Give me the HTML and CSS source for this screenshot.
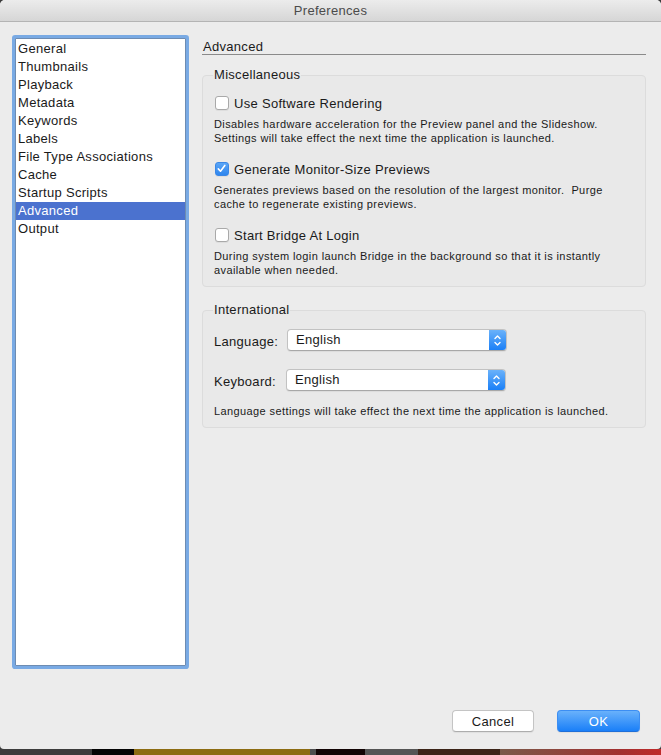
FILE: index.html
```html
<!DOCTYPE html>
<html lang="en">
<head>
    <meta charset="UTF-8">
    <meta name="viewport" content="width=device-width, initial-scale=1.0">
    <title>Preferences</title>
    <link rel="stylesheet" href="styles.css">
</head>
<body>
    <div class="window">
        <div class="titlebar">Preferences</div>

        <div class="main">
            <ul class="nav-list">
                <li>General</li>
                <li>Thumbnails</li>
                <li>Playback</li>
                <li>Metadata</li>
                <li>Keywords</li>
                <li>Labels</li>
                <li>File Type Associations</li>
                <li>Cache</li>
                <li>Startup Scripts</li>
                <li class="selected">Advanced</li>
                <li>Output</li>
            </ul>

            <div class="pane">
                <div class="pane-title">Advanced</div>

                <fieldset class="group misc">
                    <legend>Miscellaneous</legend>

                    <div class="option">
                        <span class="check"></span>
                        <span>Use Software Rendering</span>
                    </div>
                    <div class="option-desc">
                        Disables hardware acceleration for the Preview panel and the Slideshow.<br>
                        Settings will take effect the next time the application is launched.
                    </div>

                    <div class="option">
                        <span class="check checked">
                            <svg width="13" height="13" viewBox="0 0 13 13"><path d="M3.3 6.9 L5.5 9.2 L9.8 3.4" fill="none" stroke="#fff" stroke-width="1.6" stroke-linecap="round" stroke-linejoin="round"/></svg>
                        </span>
                        <span>Generate Monitor-Size Previews</span>
                    </div>
                    <div class="option-desc">
                        Generates previews based on the resolution of the largest monitor.&nbsp; Purge<br>
                        cache to regenerate existing previews.
                    </div>

                    <div class="option">
                        <span class="check"></span>
                        <span>Start Bridge At Login</span>
                    </div>
                    <div class="option-desc">
                        During system login launch Bridge in the background so that it is instantly<br>
                        available when needed.
                    </div>
                </fieldset>

                <fieldset class="group intl">
                    <legend>International</legend>

                    <div class="field-row">
                        <span class="field-label">Language:</span>
                        <div class="popup">
                            <span class="popup-value">English</span>
                            <span class="popup-arrows">
                                <svg width="17" height="21" viewBox="0 0 17 21"><path d="M6 8.5 L8.5 6 L11 8.5 M6 12.5 L8.5 15 L11 12.5" fill="none" stroke="#fff" stroke-width="1.4" stroke-linecap="round" stroke-linejoin="round"/></svg>
                            </span>
                        </div>
                    </div>

                    <div class="field-row keyboard">
                        <span class="field-label">Keyboard:</span>
                        <div class="popup">
                            <span class="popup-value">English</span>
                            <span class="popup-arrows">
                                <svg width="17" height="21" viewBox="0 0 17 21"><path d="M6 8.5 L8.5 6 L11 8.5 M6 12.5 L8.5 15 L11 12.5" fill="none" stroke="#fff" stroke-width="1.4" stroke-linecap="round" stroke-linejoin="round"/></svg>
                            </span>
                        </div>
                    </div>

                    <div class="option-desc note">
                        Language settings will take effect the next time the application is launched.
                    </div>
                </fieldset>
            </div>
        </div>

        <div class="footer">
            <button class="btn">Cancel</button>
            <button class="btn primary">OK</button>
        </div>
    </div>
    <div class="desktop"></div>
</body>
</html>
```

FILE: styles.css
```css
html, body {
    margin: 0;
    padding: 0;
}

body {
    width: 661px;
    height: 755px;
    overflow: hidden;
    font-family: "Liberation Sans", Arial, sans-serif;
    font-size: 13px;
    letter-spacing: 0.3px;
    color: #1a1a1a;
    background: #3a3a3a;
}

.window {
    height: 749px;
    background: #ececec;
    border-radius: 5px 5px 4px 4px;
    display: flex;
    flex-direction: column;
    overflow: hidden;
}

.titlebar {
    height: 21px;
    line-height: 22px;
    text-align: center;
    color: #4b4b4b;
    background: linear-gradient(#ececec, #d6d6d6);
    border-bottom: 1px solid #b4b4b4;
    flex-shrink: 0;
}

.main {
    display: flex;
    padding: 16px 15px 0 15px;
    height: 631px;
}

/* source list with focus ring */
.nav-list {
    list-style: none;
    margin: 0;
    padding: 1px 0 0 0;
    width: 169px;
    height: 625px;
    background: #fff;
    border: 1px solid #6d8cb2;
    box-shadow: 0 0 0 3px #79aae4;
    border-radius: 1px;
    flex-shrink: 0;
}

.nav-list li {
    height: 18px;
    line-height: 18px;
    padding-left: 2px;
    white-space: nowrap;
}

.nav-list li.selected {
    background: #4b72cf;
    color: #fff;
}

.pane {
    flex: 1;
    margin-left: 16px;
    margin-right: 0;
}

.pane-title {
    line-height: 14px;
    padding-top: 2px;
    padding-left: 1px;
    border-bottom: 1px solid #8a8a8a;
}

.group {
    margin: 12px 0 0 0;
    padding: 11px 10px 9px 11px;
    border: 1px solid #dcdcdc;
    border-radius: 4px;
    background: rgba(0, 0, 0, 0.012);
}

.group legend {
    padding: 0 1px;
    line-height: 16px;
    margin-left: -1px;
}

.intl {
    margin-top: 15px;
    padding-top: 11px;
}

.option {
    display: flex;
    align-items: center;
    gap: 5px;
    height: 18px;
    margin-top: 15px;
}

.misc .option:first-of-type {
    margin-top: 0;
}

.check {
    width: 12px;
    height: 12px;
    border: 1px solid #a9a9a9;
    border-radius: 3px;
    background: #fff;
    margin-left: 1px;
    box-shadow: 0 1px 0 rgba(0, 0, 0, 0.05);
    position: relative;
}

.check.checked {
    border-color: #3a87e6;
    background: linear-gradient(#5aa5f6, #2f86ee);
}

.check svg {
    position: absolute;
    left: -1px;
    top: -1px;
}

.option-desc {
    font-size: 11px;
    line-height: 14px;
    letter-spacing: 0.4px;
    margin-top: 5px;
    color: #1a1a1a;
}

.field-row {
    display: flex;
    align-items: center;
    height: 22px;
}

.field-row.keyboard {
    margin-top: 18px;
}

.field-label {
    width: 73px;
    padding-top: 2px;
}

.keyboard .field-label {
    width: 72px;
}

.popup {
    width: 218px;
    height: 20px;
    display: flex;
    background: #fff;
    border: 1px solid #c2c2c2;
    border-bottom-color: #a8a8a8;
    border-radius: 4px;
    overflow: hidden;
    box-shadow: 0 1px 1px rgba(0, 0, 0, 0.06);
}

.popup-value {
    flex: 1;
    padding-left: 8px;
    line-height: 19px;
}

.popup-arrows {
    width: 17px;
    height: 20px;
    background: linear-gradient(#6ab2fa, #1b80f7);
    display: flex;
    align-items: center;
    justify-content: center;
}

.note {
    margin-top: 13px;
}

.footer {
    display: flex;
    justify-content: flex-end;
    gap: 23px;
    padding: 41px 21px 0 0;
}

.btn {
    font-family: "Liberation Sans", Arial, sans-serif;
    font-size: 13px;
    letter-spacing: 0.3px;
    width: 82px;
    height: 22px;
    padding: 0;
    border: 1px solid #c4c4c4;
    border-bottom-color: #adadad;
    border-radius: 4px;
    background: #fff;
    color: #1a1a1a;
    box-shadow: 0 1px 1px rgba(0, 0, 0, 0.06);
}

.btn.primary {
    width: 83px;
    color: #fff;
    border-color: #3c8ef3;
    border-bottom-color: #1f6fd8;
    background: linear-gradient(#69b1fb, #1a7ff8);
}

.desktop {
    height: 6px;
    background: linear-gradient(90deg,
        #3d3d3d 0, #3d3d3d 92px,
        #050505 92px, #050505 134px,
        #8c6c12 134px, #8c6c12 310px,
        #4d4d4d 310px, #4d4d4d 316px,
        #120404 316px, #120404 365px,
        #555 365px, #555 418px,
        #3c2418 418px, #3c2418 500px,
        #7a5a4a 500px, #a23030 620px, #c02a2a 661px);
}
```
